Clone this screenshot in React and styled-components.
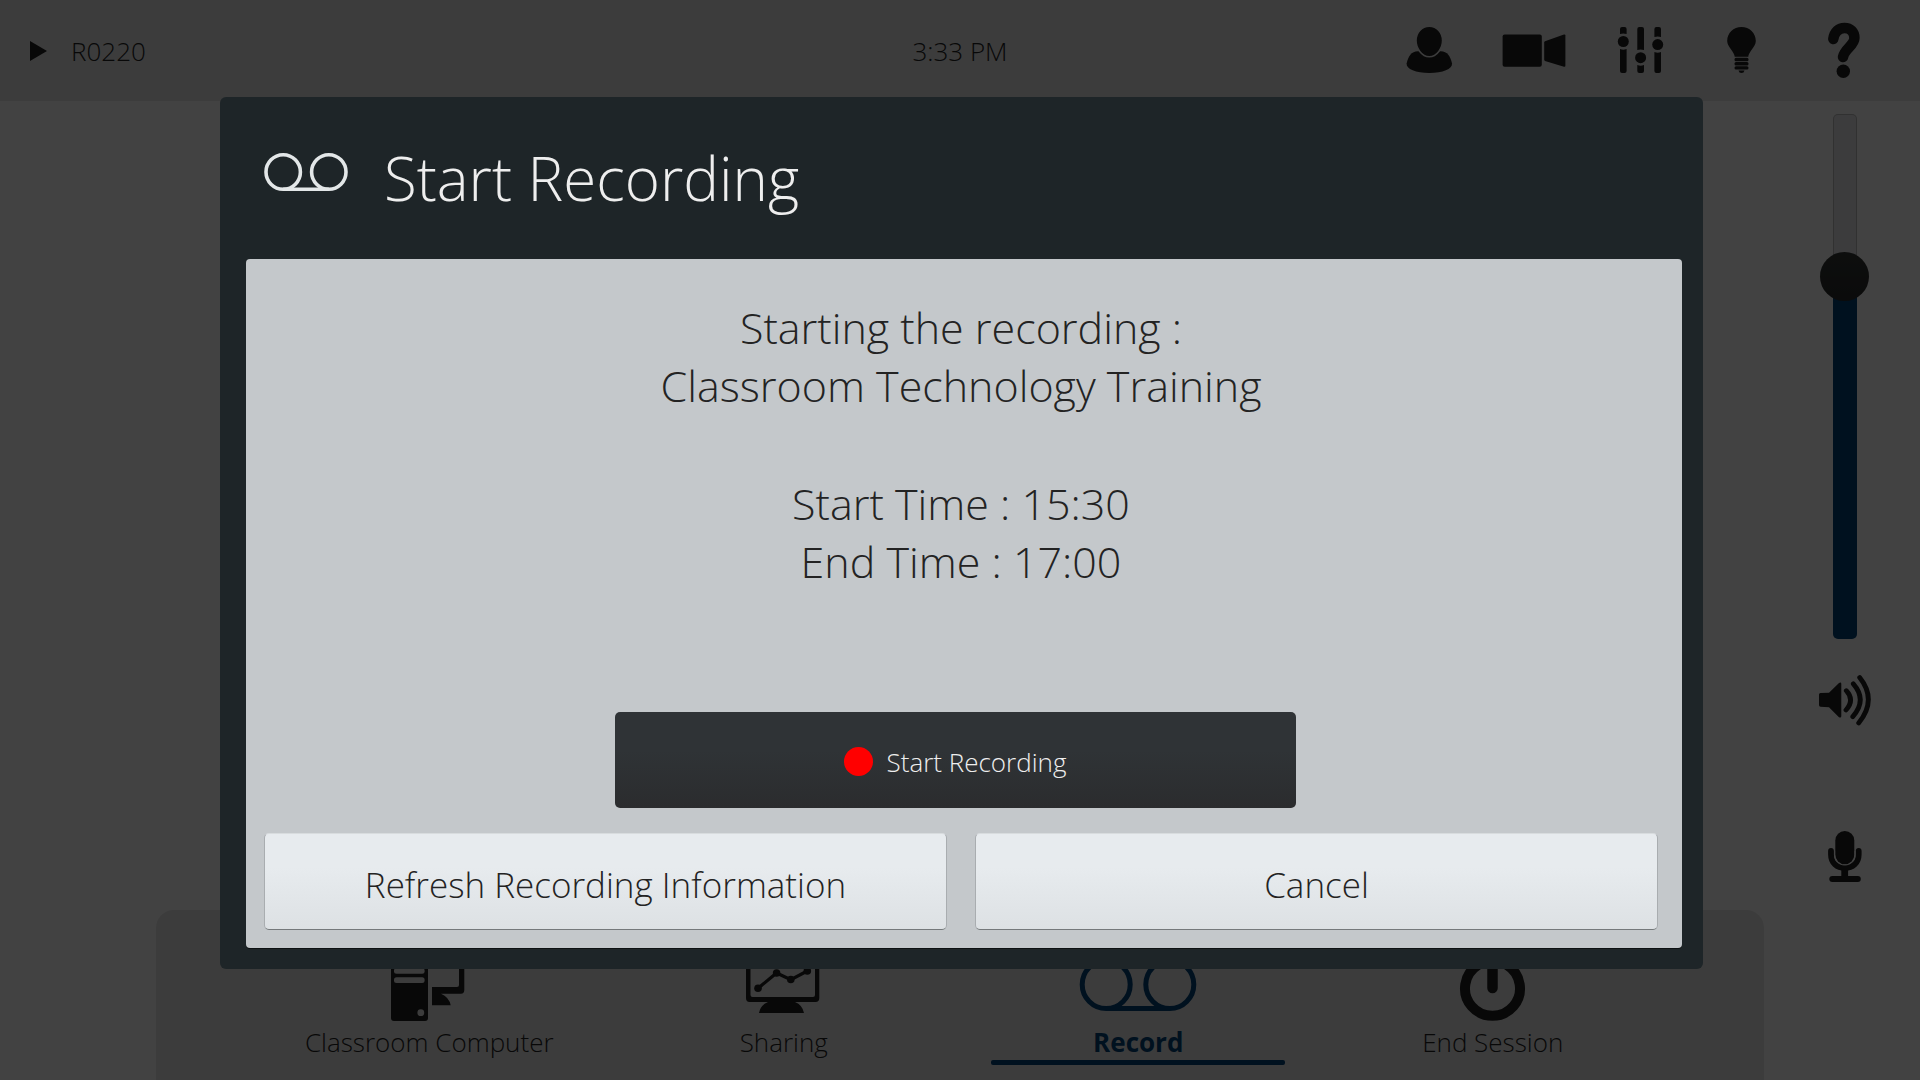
import React, { useState } from "react";
import styled, { createGlobalStyle } from "styled-components";

const GlobalStyle = createGlobalStyle`
  * {
    box-sizing: border-box;
  }
  body {
    margin: 0;
    background: #ffffff;
    color: #1f1f1f;
    font-family: "Open Sans", "Noto Sans", sans-serif;
    font-weight: 300;
  }
  button {
    padding: 0;
    border: 0;
    background: none;
    color: inherit;
    font: inherit;
    cursor: pointer;
  }
  svg {
    display: block;
  }
`;

const Page = styled.div`
  display: flex;
  flex-direction: column;
  min-height: 100vh;
`;

const TopBar = styled.header`
  display: grid;
  grid-template-columns: 1fr auto 1fr;
  align-items: center;
  height: 101px;
  padding: 0 22px;
  background: #e7e7e7;
  font-size: 26px;
`;

const Room = styled.div`
  display: flex;
  align-items: center;
  gap: 24px;
  padding-left: 8px;
`;

const Tools = styled.nav`
  display: flex;
  justify-content: flex-end;
`;

const ToolButton = styled.button`
  display: flex;
  justify-content: center;
  width: 104px;
`;

const Content = styled.div`
  flex: 1;
  display: grid;
  grid-template-columns: 156px 1fr 156px;
`;

const Dock = styled.nav`
  grid-column: 2;
  align-self: end;
  display: flex;
  height: 170px;
  padding: 34px 94px 0 96px;
  border-radius: 18px 18px 0 0;
  background: #e7e7e7;
`;

const DockItem = styled.button`
  flex: 1;
  display: flex;
  flex-direction: column;
  align-items: center;
  font-size: 26px;
  line-height: 36px;
  color: ${(props) => (props.$active ? "#004177" : "inherit")};
  font-weight: ${(props) => (props.$active ? 700 : 300)};

  &::after {
    content: "";
    width: 294px;
    height: 5px;
    border-radius: 2px;
    background: ${(props) => (props.$active ? "#004177" : "transparent")};
  }
`;

const AudioPanel = styled.aside`
  display: flex;
  flex-direction: column;
  align-items: center;
  gap: 36px;
  padding: 13px 0 0 5px;
`;

const MicButton = styled.button`
  margin-top: 69px;
`;

const Volume = styled.input`
  appearance: none;
  writing-mode: vertical-lr;
  direction: rtl;
  width: 50px;
  height: 525px;
  margin: 0;
  background: none;

  &::-webkit-slider-runnable-track {
    box-sizing: border-box;
    width: 24px;
    height: 100%;
    border: 1px solid transparent;
    border-radius: 5px;
    background:
      linear-gradient(
          to top,
          #004177 ${(props) => props.value}%,
          transparent ${(props) => props.value}%
        )
        border-box,
      linear-gradient(#e6e7ea, #e6e7ea) padding-box,
      linear-gradient(#bcbcbc, #bcbcbc) border-box;
  }

  &::-webkit-slider-thumb {
    appearance: none;
    box-sizing: border-box;
    width: 49px;
    height: 49px;
    margin-left: -14px;
    border-radius: 50%;
    background: linear-gradient(#343836, #2b2b2b);
  }
`;

const Backdrop = styled.div`
  position: fixed;
  inset: 0;
  display: flex;
  padding: 97px 217px 111px 220px;
  background: rgba(0, 0, 0, 0.74);
`;

const Dialog = styled.section`
  flex: 1;
  display: flex;
  flex-direction: column;
  padding: 0 21px 21px 26px;
  border-radius: 6px;
  background: #1e2528;
`;

const DialogHeader = styled.header`
  display: flex;
  align-items: flex-start;
  gap: 36px;
  height: 162px;
  padding: 56px 0 0 18px;
  color: #e3e7e8;
`;

const DialogTitle = styled.h1`
  margin: 0;
  color: #eeeeee;
  font-size: 60px;
  font-weight: 300;
  line-height: 50px;
`;

const Panel = styled.div`
  flex: 1;
  display: flex;
  flex-direction: column;
  padding: 40px 24px 18px 18px;
  border-radius: 4px;
  background: #c4c8cb;
  box-shadow: 0 1px 0 #0d1112;
  color: #232323;
`;

const Info = styled.div`
  flex: 1;
  font-size: 43px;
  line-height: 58px;
  text-align: center;

  p {
    margin: 0 0 60px;
  }
`;

const PrimaryRow = styled.div`
  display: flex;
  justify-content: center;
  padding-right: 12px;
`;

const RecordButton = styled.button`
  display: flex;
  align-items: center;
  justify-content: center;
  gap: 14px;
  width: calc(50% - 10px);
  height: 96px;
  padding-top: 3px;
  border-radius: 5px;
  background: linear-gradient(#2f3336 40%, #2b2c2e);
  color: #eeeeee;
  font-size: 26px;
`;

const RecordDot = styled.span`
  width: 29px;
  height: 29px;
  border-radius: 50%;
  background: #ff0000;
`;

const Actions = styled.div`
  display: grid;
  grid-template-columns: 1fr 1fr;
  gap: 28px;
  margin-top: 25px;
`;

const ActionButton = styled.button`
  height: 97px;
  padding-top: 5px;
  border: 1px solid #a9adb0;
  border-top-color: #d8dcde;
  border-bottom-color: #75797b;
  border-radius: 5px;
  background: linear-gradient(#e7ebee 35%, #dde1e4);
  font-size: 35px;
`;

const PlayIcon = () => (
  <svg width="17" height="20" viewBox="0 0 17 20" fill="currentColor">
    <path d="M0 0 17 10 0 20z" />
  </svg>
);

const ToolIcon = ({ children }) => (
  <svg width="64" height="58" viewBox="0 0 64 58" fill="currentColor">
    {children}
  </svg>
);

const UserIcon = () => (
  <ToolIcon>
    <path d="M20 29.3C13 29.8 10.500 34 8.600 41.500 8 47 18 51 31.300 51S54.600 47 54 41.500C52.300 34 49.500 29.800 42.600 29.300z" />
    <path
      d="M31.300 4.200C39 4.200 44.600 10.500 44.600 18.500 44.600 26 39 34.700 31.300 34.700S18 26 18 18.500C18 10.500 23.600 4.200 31.300 4.200z"
      stroke="#e7e7e7"
      strokeWidth="1.600"
    />
  </ToolIcon>
);

const CameraIcon = () => (
  <ToolIcon>
    <rect x="0.600" y="12.500" width="39.200" height="32.300" rx="2" />
    <path d="M43 19.300 62 12.600Q63.400 12.300 63.400 13.500V43.800Q63.400 45 62 44.700L43 38.900Q42.200 38.500 42.200 37.500V20.500Q42.200 19.600 43 19.300z" />
  </ToolIcon>
);

const SlidersIcon = () => (
  <ToolIcon>
    <path d="M14 12V7Q14 5 16 5H18.600Q20.600 5 20.600 7V12Q17.300 11 14 12zM14 27Q17.300 28.500 20.600 27V49Q20.600 51 18.600 51H16Q14 51 14 49z" />
    <path d="M31.300 28V7Q31.300 5 33.300 5H36Q38 5 38 7V28Q34.600 27 31.300 28zM31.300 43Q34.600 44.500 38 43V49Q38 51 36 51H33.300Q31.300 51 31.300 49z" />
    <path d="M48.400 15V7Q48.400 5 50.400 5H53Q55 5 55 7V15Q51.700 14 48.400 15zM48.400 30Q51.700 31.500 55 30V49Q55 51 53 51H50.400Q48.400 51 48.400 49z" />
    <circle cx="17.300" cy="19.500" r="5.500" />
    <circle cx="34.600" cy="35.700" r="5.500" />
    <circle cx="51.700" cy="22.600" r="5.500" />
  </ToolIcon>
);

const LightIcon = () => (
  <ToolIcon>
    <path d="M31.500 5C39.500 5 45.800 11 45.800 19 45.800 25 38.300 30 38.300 34.800H24.700C24.700 30 17.200 25 17.200 19 17.200 11 23.500 5 31.500 5z" />
    <rect x="24.500" y="35.800" width="14" height="3.400" rx="1.500" />
    <rect x="24.500" y="40" width="14" height="3.400" rx="1.500" />
    <rect x="24.500" y="44.200" width="14" height="3.400" rx="1.500" />
    <path d="M28.500 48.400H34.500Q34 51 31.500 51T28.500 48.400z" />
  </ToolIcon>
);

const HelpIcon = () => (
  <ToolIcon>
    <path
      d="M19.300 17C20.500 9.500 25 6 30.500 6 36.500 6 40.400 10 40.400 16 40.400 23.500 30.500 26.500 29 35"
      fill="none"
      stroke="currentColor"
      strokeWidth="10.500"
      strokeLinecap="round"
    />
    <circle cx="29.300" cy="49.300" r="6.700" />
  </ToolIcon>
);

const SpeakerIcon = () => (
  <svg width="52" height="51" viewBox="0 0 52 51" fill="currentColor">
    <path d="M1.500 18 10 17.700 20 8Q22.300 6.700 22.300 9V41Q22.300 43.300 20 42.300L10 32.200 1.500 31.700Q0 31.700 0 30V19.500Q0 18 1.500 18z" />
    <path
      d="M27.300 15.700Q36 25 27 35M34.300 8.800Q48.500 25 33.800 41.600M40.700 2.600Q58.500 25 39.700 48"
      fill="none"
      stroke="currentColor"
      strokeWidth="4.800"
      strokeLinecap="round"
    />
  </svg>
);

const MicIcon = () => (
  <svg width="34" height="51" viewBox="0 0 34 51" fill="currentColor">
    <rect x="7.300" y="0" width="19" height="33.300" rx="9.500" />
    <path
      d="M3 20V23.500C3 32 9 37 16.800 37S30.700 32 30.700 23.500V20"
      fill="none"
      stroke="currentColor"
      strokeWidth="5.800"
      strokeLinecap="round"
    />
    <path
      d="M6.600 20V23.500C6.600 30 11 34 16.800 34S27 30 27 23.500V20"
      fill="none"
      stroke="#ffffff"
      strokeWidth="1"
    />
    <rect x="13.300" y="38" width="6.800" height="9" />
    <rect x="1.300" y="45" width="31.500" height="6" rx="3" />
  </svg>
);

const DockIcon = ({ children }) => (
  <svg width="120" height="80" viewBox="0 0 120 80" fill="currentColor">
    {children}
  </svg>
);

const ComputerIcon = () => (
  <DockIcon>
    <rect x="22" y="10" width="37" height="67" rx="3" />
    <rect x="25" y="24" width="30.600" height="5.700" rx="2.500" fill="#e7e7e7" />
    <rect x="25" y="33.200" width="30.600" height="5.700" rx="2.500" fill="#e7e7e7" />
    <circle cx="51.800" cy="68.700" r="3.400" fill="#e7e7e7" />
    <path d="M63 10H92Q95.300 10 95.300 13.500V46Q95.300 49.700 92 49.700H72Q80 53 81.700 61.300H63V43H88Q90 43 90 41V15H63z" />
  </DockIcon>
);

const SharingIcon = () => (
  <DockIcon>
    <path
      d="M25.500 5H91.500Q95.300 5 95.300 9V54Q95.300 58 91.500 58H71Q78.500 61 80 69H35Q36.500 61 44 58H25.500Q22 58 22 54V9Q22 5 25.500 5zM28.500 9.500Q26.500 9.500 26.500 11.500V51Q26.500 53 28.500 53H89Q91 53 91 51V11.500Q91 9.500 89 9.500z"
      fillRule="evenodd"
    />
    <path
      d="M34 44.300 52.600 29 66.800 35.700 83.300 27"
      fill="none"
      stroke="currentColor"
      strokeWidth="3.200"
    />
    <circle cx="34" cy="44.300" r="3.800" />
    <circle cx="52.600" cy="29" r="3.800" />
    <circle cx="66.800" cy="35.500" r="3.800" />
    <circle cx="83.300" cy="27" r="3.800" />
  </DockIcon>
);

const tapeReels = (
  <g fill="none" stroke="currentColor" strokeWidth="5">
    <circle cx="28.200" cy="40.500" r="24" />
    <circle cx="91.800" cy="40.500" r="24" />
    <path d="M28 64.500H92" />
  </g>
);

const TapeIcon = () => <DockIcon>{tapeReels}</DockIcon>;

const TitleTapeIcon = () => (
  <svg width="84" height="38" viewBox="1.700 14 116.600 53">
    {tapeReels}
  </svg>
);

const PowerIcon = () => (
  <DockIcon>
    <path
      d="M45 21A27.500 27.500 0 1 0 74 21"
      fill="none"
      stroke="currentColor"
      strokeWidth="10"
      strokeLinecap="round"
    />
    <path
      d="M59.500 12V44"
      stroke="currentColor"
      strokeWidth="10.500"
      strokeLinecap="round"
    />
  </DockIcon>
);

const tools = [
  { label: "Users", Icon: UserIcon },
  { label: "Camera", Icon: CameraIcon },
  { label: "Audio levels", Icon: SlidersIcon },
  { label: "Lights", Icon: LightIcon },
  { label: "Help", Icon: HelpIcon },
];

const dockItems = [
  { label: "Classroom Computer", Icon: ComputerIcon },
  { label: "Sharing", Icon: SharingIcon },
  { label: "Record", Icon: TapeIcon, active: true },
  { label: "End Session", Icon: PowerIcon },
];

const App = () => {
  const [volume, setVolume] = useState(71);

  return (
    <>
      <GlobalStyle />
      <Page>
        <TopBar>
          <Room>
            <PlayIcon />
            <span>R0220</span>
          </Room>
          <time>3:33 PM</time>
          <Tools>
            {tools.map(({ label, Icon }) => (
              <ToolButton key={label} aria-label={label}>
                <Icon />
              </ToolButton>
            ))}
          </Tools>
        </TopBar>
        <Content>
          <Dock>
            {dockItems.map(({ label, Icon, active }) => (
              <DockItem key={label} $active={active}>
                <Icon />
                {label}
              </DockItem>
            ))}
          </Dock>
          <AudioPanel>
            <Volume
              type="range"
              aria-label="Volume"
              value={volume}
              onChange={(e) => setVolume(Number(e.target.value))}
            />
            <button aria-label="Mute">
              <SpeakerIcon />
            </button>
            <MicButton aria-label="Microphone">
              <MicIcon />
            </MicButton>
          </AudioPanel>
        </Content>
      </Page>
      <Backdrop>
        <Dialog role="dialog" aria-labelledby="dialog-title">
          <DialogHeader>
            <TitleTapeIcon />
            <DialogTitle id="dialog-title">Start Recording</DialogTitle>
          </DialogHeader>
          <Panel>
            <Info>
              <p>
                Starting the recording :
                <br />
                Classroom Technology Training
              </p>
              <p>
                Start Time : 15:30
                <br />
                End Time : 17:00
              </p>
            </Info>
            <PrimaryRow>
              <RecordButton>
                <RecordDot />
                Start Recording
              </RecordButton>
            </PrimaryRow>
            <Actions>
              <ActionButton>Refresh Recording Information</ActionButton>
              <ActionButton>Cancel</ActionButton>
            </Actions>
          </Panel>
        </Dialog>
      </Backdrop>
    </>
  );
};

export default App;
